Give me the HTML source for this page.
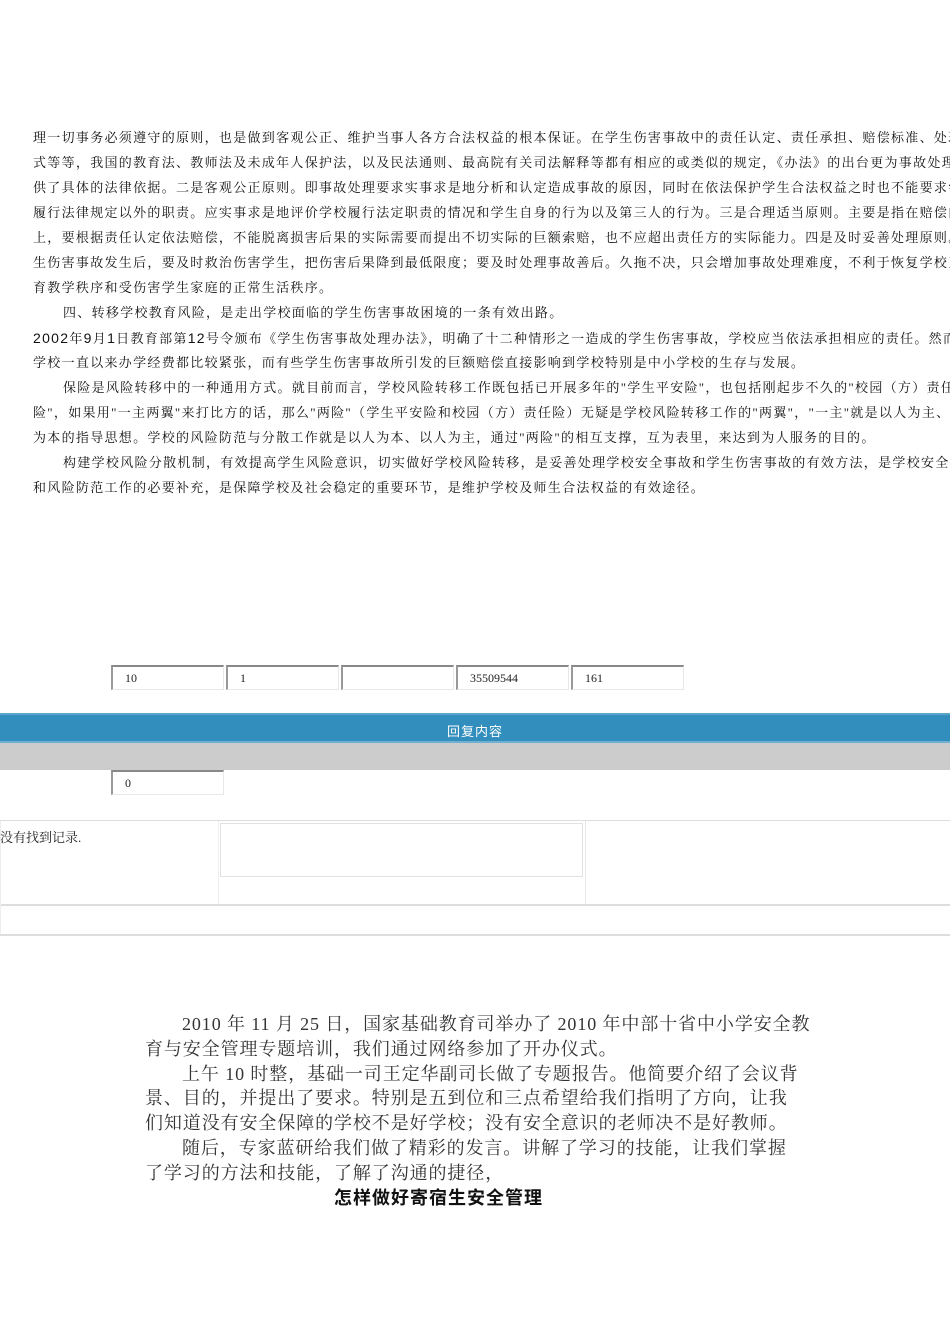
<!DOCTYPE html>
<html><head><meta charset="utf-8"><style>
html,body{margin:0;padding:0;background:#fff;width:950px;height:1344px;overflow:hidden;position:relative}
.l{position:absolute;left:33px;white-space:nowrap;font:13px "Liberation Serif","Noto Serif CJK SC",serif;letter-spacing:1.3px;color:#111;line-height:16px}
.in{position:absolute;height:22px;background:#fff;border-top:2px solid #888;border-left:2px solid #999;border-right:1px solid #e8e8e8;border-bottom:1px solid #e8e8e8;font:12px "Liberation Serif",serif;color:#222;line-height:22px;padding-left:12px;box-sizing:content-box}
.b{position:absolute;left:145px;white-space:nowrap;font:18px "Liberation Serif","Noto Serif CJK SC",serif;color:#333;line-height:22px;letter-spacing:0.9px}
</style></head><body>
<div class="l" style="top:130px">理一切事务必须遵守的原则，也是做到客观公正、维护当事人各方合法权益的根本保证。在学生伤害事故中的责任认定、责任承担、赔偿标准、处理方</div>
<div class="l" style="top:155px">式等等，我国的教育法、教师法及未成年人保护法，以及民法通则、最高院有关司法解释等都有相应的或类似的规定，《办法》的出台更为事故处理提</div>
<div class="l" style="top:180px">供了具体的法律依据。二是客观公正原则。即事故处理要求实事求是地分析和认定造成事故的原因，同时在依法保护学生合法权益之时也不能要求学校</div>
<div class="l" style="top:205px">履行法律规定以外的职责。应实事求是地评价学校履行法定职责的情况和学生自身的行为以及第三人的行为。三是合理适当原则。主要是指在赔偿问题</div>
<div class="l" style="top:230px">上，要根据责任认定依法赔偿，不能脱离损害后果的实际需要而提出不切实际的巨额索赔，也不应超出责任方的实际能力。四是及时妥善处理原则。学</div>
<div class="l" style="top:255px">生伤害事故发生后，要及时救治伤害学生，把伤害后果降到最低限度；要及时处理事故善后。久拖不决，只会增加事故处理难度，不利于恢复学校正常教</div>
<div class="l" style="top:280px">育教学秩序和受伤害学生家庭的正常生活秩序。</div>
<div class="l" style="top:305px;left:63px">四、转移学校教育风险，是走出学校面临的学生伤害事故困境的一条有效出路。</div>
<div class="l" style="top:330px"><span style="font-family:'Liberation Sans',sans-serif;font-size:14px">2002</span>年<span style="font-family:'Liberation Sans',sans-serif;font-size:14px">9</span>月<span style="font-family:'Liberation Sans',sans-serif;font-size:14px">1</span>日教育部第<span style="font-family:'Liberation Sans',sans-serif;font-size:14px">12</span>号令颁布《学生伤害事故处理办法》，明确了十二种情形之一造成的学生伤害事故，学校应当依法承担相应的责任。然而</div>
<div class="l" style="top:355px">学校一直以来办学经费都比较紧张，而有些学生伤害事故所引发的巨额赔偿直接影响到学校特别是中小学校的生存与发展。</div>
<div class="l" style="top:380px;left:63px">保险是风险转移中的一种通用方式。就目前而言，学校风险转移工作既包括已开展多年的"学生平安险"，也包括刚起步不久的"校园（方）责任</div>
<div class="l" style="top:405px">险"，如果用"一主两翼"来打比方的话，那么"两险"（学生平安险和校园（方）责任险）无疑是学校风险转移工作的"两翼"，"一主"就是以人为主、以人</div>
<div class="l" style="top:430px">为本的指导思想。学校的风险防范与分散工作就是以人为本、以人为主，通过"两险"的相互支撑，互为表里，来达到为人服务的目的。</div>
<div class="l" style="top:455px;left:63px">构建学校风险分散机制，有效提高学生风险意识，切实做好学校风险转移，是妥善处理学校安全事故和学生伤害事故的有效方法，是学校安全管理</div>
<div class="l" style="top:480px">和风险防范工作的必要补充，是保障学校及社会稳定的重要环节，是维护学校及师生合法权益的有效途径。</div>

<div class="in" style="left:111px;top:665px;width:98px">10</div>
<div class="in" style="left:226px;top:665px;width:98px">1</div>
<div class="in" style="left:341px;top:665px;width:98px"></div>
<div class="in" style="left:456px;top:665px;width:98px">35509544</div>
<div class="in" style="left:571px;top:665px;width:98px">161</div>

<div style="position:absolute;left:0;top:713px;width:950px;height:30px;background:#328ebd;border-top:2px solid #5aa3c9;box-sizing:border-box;border-bottom:2px solid #6fb0d2"></div>
<div style="position:absolute;left:0;top:716px;width:950px;height:30px;text-align:center;color:#fff;font:13px 'Liberation Sans','Noto Sans CJK SC',sans-serif;line-height:32px;letter-spacing:1px">回复内容</div>
<div style="position:absolute;left:0;top:743px;width:950px;height:27px;background:#cccccc"></div>
<div class="in" style="left:111px;top:770px;width:98px">0</div>

<div style="position:absolute;left:0;top:820px;width:950px;height:115px;border-top:1px solid #ddd">
 <div style="position:absolute;left:0;top:0;width:950px;height:83px;border-bottom:2px solid #ddd"></div>
 <div style="position:absolute;left:218px;top:0;width:1px;height:83px;background:#eee"></div>
 <div style="position:absolute;left:585px;top:0;width:1px;height:83px;background:#e6e6e6"></div>
 <div style="position:absolute;left:220px;top:2px;width:361px;height:52px;border:1px solid #e2e2e2"></div>
 <div style="position:absolute;left:0;top:0;width:1px;height:115px;background:#eee"></div>
 <div style="position:absolute;left:0;top:113px;width:950px;height:2px;background:#ddd"></div>
 <div style="position:absolute;left:0;top:6px;font:13px 'Liberation Serif','Noto Serif CJK SC',serif;color:#222">没有找到记录.</div>
</div>

<div class="b" style="top:1013px;left:182px">2010 年 11 月 25 日，国家基础教育司举办了 2010 年中部十省中小学安全教</div>
<div class="b" style="top:1038px">育与安全管理专题培训，我们通过网络参加了开办仪式。</div>
<div class="b" style="top:1063px;left:182px">上午 10 时整，基础一司王定华副司长做了专题报告。他简要介绍了会议背</div>
<div class="b" style="top:1087px">景、目的，并提出了要求。特别是五到位和三点希望给我们指明了方向，让我</div>
<div class="b" style="top:1112px">们知道没有安全保障的学校不是好学校；没有安全意识的老师决不是好教师。</div>
<div class="b" style="top:1137px;left:182px">随后，专家蓝研给我们做了精彩的发言。讲解了学习的技能，让我们掌握</div>
<div class="b" style="top:1162px">了学习的方法和技能，了解了沟通的捷径，</div>
<div class="b" style="top:1187px;left:334px;font-family:'Liberation Sans','Noto Sans CJK SC',sans-serif;font-weight:bold;color:#111;letter-spacing:1px">怎样做好寄宿生安全管理</div>
</body></html>
